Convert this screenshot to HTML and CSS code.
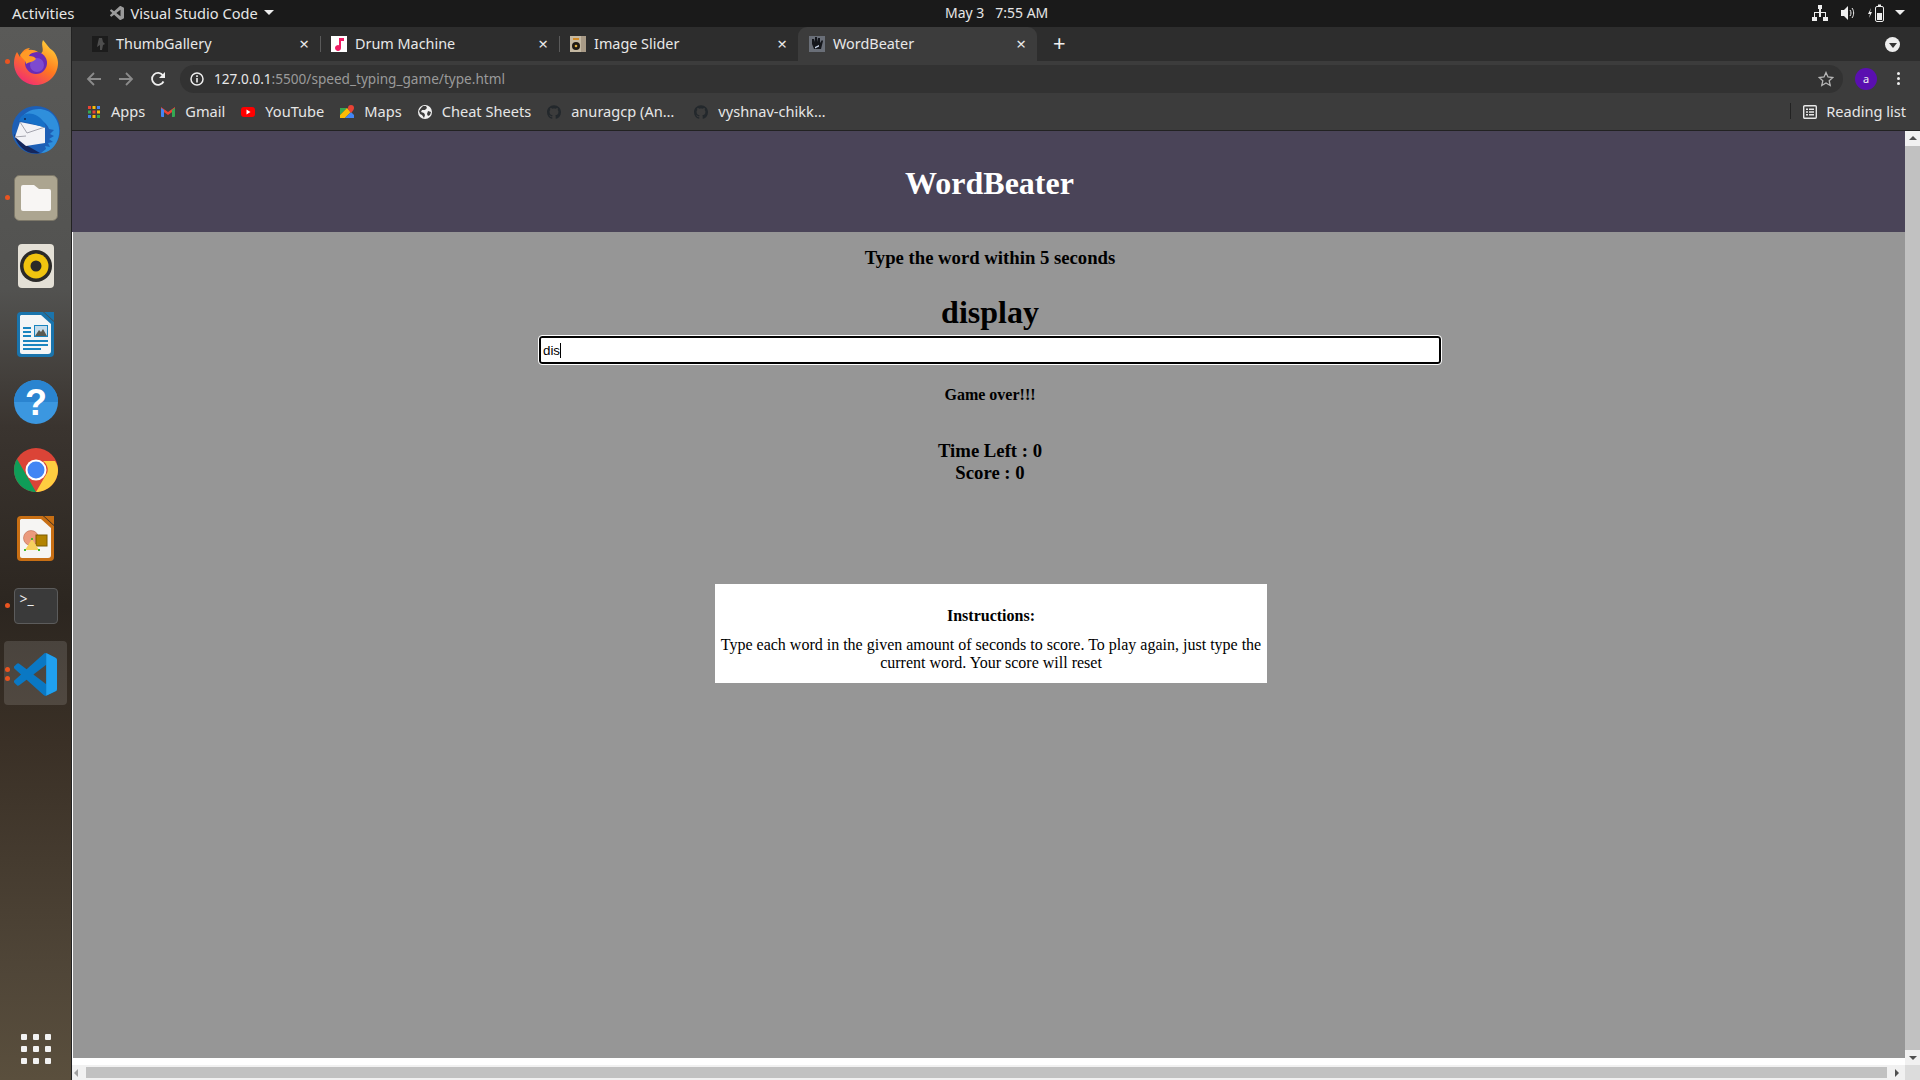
FILE: index.html
```html
<!DOCTYPE html>
<html lang="en">
<head>
    <meta charset="UTF-8">
    <title>WordBeater</title>
    <link rel="stylesheet" href="styles.css">
</head>

<body>
    <!-- Ubuntu top bar -->
    <div class="topbar">
        <span class="activities">Activities</span>
        <span class="app-name">
            <svg class="app-icon" width="14" height="14" viewBox="0 0 24 24"><path fill="#9a9a9a" d="M23.15 2.587L18.21.21a1.494 1.494 0 0 0-1.705.29l-9.46 8.63-4.12-3.128a.999.999 0 0 0-1.276.057L.327 7.261A1 1 0 0 0 .326 8.74L3.899 12 .326 15.26a1 1 0 0 0 .001 1.479L1.65 17.94a.999.999 0 0 0 1.276.057l4.12-3.128 9.46 8.63a1.492 1.492 0 0 0 1.704.29l4.942-2.377A1.5 1.5 0 0 0 24 20.06V3.939a1.5 1.5 0 0 0-.85-1.352zm-5.146 14.861L10.826 12l7.178-5.448v10.896z"/></svg>
            Visual Studio Code
            <i class="down-arrow"></i>
        </span>
        <span class="clock">May 3&nbsp;&nbsp;&nbsp;7:55 AM</span>
        <span class="tray">
            <svg width="16" height="16" viewBox="0 0 16 16"><path fill="#eee" d="M6 0h4v4H9v3h5v5h2v4h-5v-4h2V8H9v4H7V8H3v4h2v4H0v-4h2V7h5V4H6z"/></svg>
            <svg width="16" height="16" viewBox="0 0 16 16"><path fill="#eee" d="M1 5h3l4-4v14l-4-4H1z"/><path fill="none" stroke="#eee" d="M10 5c1.300 1.800 1.300 4.200 0 6M12 3c2.200 3 2.200 7 0 10"/></svg>
            <svg width="16" height="18" viewBox="0 0 16 18"><path fill="#eee" d="M3 4L0 10h2l-1 4 3-6H2z"/><rect x="7.500" y="2.500" width="8" height="15" rx="1.500" fill="none" stroke="#eee"/><rect x="10" y="0.500" width="3" height="2" fill="#eee"/><rect x="9" y="9" width="5" height="7" fill="#eee"/></svg>
            <i class="down-arrow tray-arrow"></i>
        </span>
    </div>

    <div class="desktop">
        <!-- Dock -->
        <nav class="dock">
            <div class="dock-item">
                <i class="dot"></i>
                <svg width="46" height="46" viewBox="0 0 46 46">
                    <defs>
                        <linearGradient id="ffBody" x1="0.8" y1="0" x2="0.2" y2="1"><stop offset="0" stop-color="#ffd23a"/><stop offset="0.5" stop-color="#ff7a1e"/><stop offset="1" stop-color="#f0267a"/></linearGradient>
                    </defs>
                    <path fill="url(#ffBody)" d="M30 1c5 6 6 8 9 10 4 3 6 9 6 13 0 12-10 22-22 22S1 36 1 24c0-4 1-8 3-11l3 5c1-5 5-9 10-9-2 2-2 3-2 4 4-2 9-1 12 2C33 12 27 7 30 1z"/>
                    <circle cx="23" cy="24" r="11" fill="#6a2bb5"/>
                    <circle cx="24" cy="26" r="7" fill="#7d4ad0"/>
                    <path fill="#ff9a26" d="M7 16c4-5 12-7 18-3-4 0-8 1-9 4 4 0 6 1 7 3-4 4-8 3-10 5 0-4-4-5-6-9z"/>
                </svg>
            </div>
            <div class="dock-item">
                <svg width="48" height="48" viewBox="0 0 48 48">
                    <circle cx="24" cy="24" r="24" fill="#1d5fb6"/>
                    <path fill="#14265c" d="M2 28c2 9 9 17 17 19 3 0 6 1 9 0L14 39z"/>
                    <path fill="#2f8fdc" d="M8 15C12 3 32-2 42 10c8 10 7 26-4 34-2 1-5 3-9 3l5-4-1-3 5 1-2-4 5-1-4-3 5-3-4-2 4-4-5-1c-2-6-8-10-14-11-7-1-12 1-15 3z"/>
                    <path fill="#f2f2f6" d="M8 16l25 5v16l-19 3-11-9z"/>
                    <path fill="none" stroke="#a3a3ae" d="M8 16l7 11 18-6M3 31l11-1"/>
                    <path fill="#1670c8" d="M7 15c1-6 8-9 14-7 7 2 12 8 13 14L21 18c-4-2-9-2-14-3z"/>
                    <circle cx="13" cy="13" r="1" fill="#10234d"/>
                </svg>
            </div>
            <div class="dock-item">
                <i class="dot"></i>
                <svg width="44" height="46" viewBox="0 0 44 46">
                    <rect x="0.500" y="0.500" width="43" height="45" rx="5" fill="#aca590" stroke="#7d7869"/>
                    <path fill="#f8f6f4" d="M7 12a2 2 0 0 1 2-2h11l5 4h10a2 2 0 0 1 2 2v18a2 2 0 0 1-2 2H9a2 2 0 0 1-2-2z"/>
                </svg>
            </div>
            <div class="dock-item">
                <svg width="36" height="44" viewBox="0 0 36 44">
                    <rect width="36" height="44" rx="4" fill="#e4e0d6"/>
                    <circle cx="18" cy="22" r="16" fill="#2b2a28"/>
                    <circle cx="18" cy="22" r="12.500" fill="#f1c40f"/>
                    <circle cx="18" cy="22" r="5.500" fill="#2b2a28"/>
                </svg>
            </div>
            <div class="dock-item">
                <svg width="38" height="46" viewBox="0 0 38 46">
                    <path fill="#1a74ac" d="M4 1h22l11 10v31a4 4 0 0 1-4 4H4a4 4 0 0 1-4-4V5a4 4 0 0 1 4-4z"/>
                    <path fill="#f4f5f6" d="M4 4h20l10 9v27a3 3 0 0 1-3 3H5a2 2 0 0 1-2-2V5z"/>
                    <path fill="#1a74ac" d="M27 1h10v9z"/>
                    <path fill="#1a84bf" d="M6 16h8v2H6zM6 20h8v2H6zM6 24h8v2H6zM6 29h25v2H6zM6 33h25v2H6zM6 37h18v2H6z"/>
                    <rect x="17" y="14" width="14" height="12" fill="#1a84bf"/>
                    <rect x="18" y="15" width="12" height="10" fill="#c6dceb"/>
                    <path fill="#5b5b52" d="M18 25l4-6 2 2 2-3 4 7z"/>
                </svg>
            </div>
            <div class="dock-item">
                <svg width="44" height="44" viewBox="0 0 44 44">
                    <circle cx="22" cy="22" r="22" fill="#3b97e0"/>
                    <path fill="#2a84d0" d="M0 22a22 22 0 0 1 44 0z"/>
                    <text class="help-mark" x="22" y="35" text-anchor="middle">?</text>
                </svg>
            </div>
            <div class="dock-item">
                <svg width="44" height="44" viewBox="0 0 44 44">
                    <circle cx="22" cy="22" r="22" fill="#db4437"/>
                    <path fill="#0f9d58" d="M3 11l11 19 8 14C10 44 0 34 0 22c0-4 1-8 3-11z"/>
                    <path fill="#ffcd40" d="M22 13h19c2 3 3 6 3 9 0 12-10 22-22 22l11-19c2-4 0-9-4-12z"/>
                    <circle cx="22" cy="22" r="10.500" fill="#fff"/>
                    <circle cx="22" cy="22" r="8.500" fill="#4285f4"/>
                </svg>
            </div>
            <div class="dock-item">
                <svg width="38" height="46" viewBox="0 0 38 46">
                    <path fill="#c86f14" d="M4 1h22l11 10v31a4 4 0 0 1-4 4H4a4 4 0 0 1-4-4V5a4 4 0 0 1 4-4z"/>
                    <path fill="#f6f5f3" d="M4 4h20l10 9v27a3 3 0 0 1-3 3H5a2 2 0 0 1-2-2V5z"/>
                    <path fill="#c86f14" d="M27 1h10v9z"/>
                    <circle cx="14" cy="23" r="7.500" fill="#eb9a7c" stroke="#b0593c" stroke-width="0.500"/>
                    <rect x="19" y="20" width="11" height="11" fill="#b38300" stroke="#7d5c00"/>
                    <path fill="#f6d05e" d="M15 24l7 11H8z"/>
                    <path fill="#44b82e" d="M14 23h2v2h-2zM7 34h2v2H7zM21 34h2v2h-2z"/>
                </svg>
            </div>
            <div class="dock-item">
                <i class="dot"></i>
                <div class="terminal-icon">&gt;_</div>
            </div>
            <div class="dock-item dock-active">
                <i class="dot dot-one"></i>
                <i class="dot dot-two"></i>
                <svg width="43" height="43" viewBox="0 0 24 24">
                    <path fill="#0a78c4" d="M23.15 2.587L18.21.21a1.494 1.494 0 0 0-1.705.29l-9.46 8.63-4.12-3.128a.999.999 0 0 0-1.276.057L.327 7.261A1 1 0 0 0 .326 8.74L3.899 12 .326 15.26a1 1 0 0 0 .001 1.479L1.65 17.94a.999.999 0 0 0 1.276.057l4.12-3.128 9.46 8.63a1.492 1.492 0 0 0 1.704.29l4.942-2.377A1.5 1.5 0 0 0 24 20.06V3.939a1.5 1.5 0 0 0-.85-1.352zm-5.146 14.861L10.826 12l7.178-5.448v10.896z"/>
                    <path fill="#20a0ef" d="M18.004.03l5.146 2.557A1.5 1.5 0 0 1 24 3.939v16.12a1.5 1.5 0 0 1-.85 1.354l-4.942 2.377a1.500 1.500 0 0 1-.204.08z"/>
                </svg>
            </div>
            <div class="app-grid">
                <i></i><i></i><i></i><i></i><i></i><i></i><i></i><i></i><i></i>
            </div>
        </nav>

        <div class="browser">
            <!-- Tabs -->
            <div class="tabstrip">
                <div class="tab">
                    <svg class="favicon" viewBox="0 0 16 16"><rect width="16" height="16" fill="#1c1c1c"/><path fill="#4e4e4e" d="M7 2h3l1 4 2 2-2 1-1 5H8V9L5 11l1-5z"/></svg>
                    <span class="tab-title">ThumbGallery</span>
                    <span class="tab-close">×</span>
                </div>
                <div class="tab">
                    <svg class="favicon" viewBox="0 0 16 16"><rect width="16" height="16" fill="#fff"/><path fill="#f01c64" d="M8 2h5v3H10v7a3 3 0 1 1-2-2.800z"/></svg>
                    <span class="tab-title">Drum Machine</span>
                    <span class="tab-close">×</span>
                </div>
                <div class="tab">
                    <svg class="favicon" viewBox="0 0 16 16"><rect width="16" height="16" fill="#c4b8a2"/><rect x="11" width="5" height="16" fill="#a89a86"/><circle cx="6" cy="10" r="4" fill="#1f1a14"/><circle cx="6" cy="10" r="1.300" fill="#e0b040"/><path fill="#d08a28" d="M3 2h6v2H3z"/></svg>
                    <span class="tab-title">Image Slider</span>
                    <span class="tab-close">×</span>
                </div>
                <div class="tab tab-active">
                    <svg class="favicon" viewBox="0 0 16 16"><rect width="16" height="16" fill="#6a6f78"/><path fill="#14161b" d="M3 3h2l1 3V1h2v5l1-4h2v5l2-3 1 1-2 8H5L3 8z"/><path fill="#c9d6ea" d="M6 11l4-2v1.500l-4 2z"/></svg>
                    <span class="tab-title">WordBeater</span>
                    <span class="tab-close">×</span>
                </div>
                <span class="new-tab">+</span>
                <span class="tab-search"><i></i></span>
            </div>

            <!-- Toolbar -->
            <div class="toolbar">
                <svg class="nav-icon" viewBox="0 0 16 16"><path fill="none" stroke="#8b8b8b" stroke-width="1.800" d="M15 8H2M8 2L2 8l6 6"/></svg>
                <svg class="nav-icon" viewBox="0 0 16 16"><path fill="none" stroke="#8b8b8b" stroke-width="1.800" d="M1 8h13M8 2l6 6-6 6"/></svg>
                <svg class="nav-icon" viewBox="0 0 16 16"><path fill="none" stroke="#f0f0f0" stroke-width="1.800" d="M13.500 10.500A6 6 0 1 1 13 4.500"/><path fill="#f0f0f0" d="M15 1v6H9z"/></svg>
                <div class="omnibox">
                    <svg class="info-icon" width="14" height="14" viewBox="0 0 14 14"><circle cx="7" cy="7" r="6" fill="none" stroke="#eee" stroke-width="1.500"/><path fill="#eee" d="M6.200 6h1.600v4.500H6.200zM6.200 3.300h1.600v1.600H6.200z"/></svg>
                    <span class="url"><span class="url-host">127.0.0.1</span>:5500/speed_typing_game/type.html</span>
                    <svg class="star-icon" width="16" height="16" viewBox="0 0 16 16"><path fill="none" stroke="#b5b5b5" stroke-width="1.300" d="M8 1.500l2 4.500 4.800.5-3.600 3.200 1 4.800L8 12l-4.200 2.500 1-4.800L1.200 6.500 6 6z"/></svg>
                </div>
                <span class="avatar">a</span>
                <span class="menu-dots"><i></i><i></i><i></i></span>
            </div>

            <!-- Bookmarks bar -->
            <div class="bookmarks">
                <span class="bookmark">
                    <svg class="bm-icon" viewBox="0 0 14 14"><path fill="#ea4335" d="M1 1h3v3H1z"/><path fill="#fbbc05" d="M5.500 1h3v3h-3z"/><path fill="#4285f4" d="M10 1h3v3h-3z"/><path fill="#34a853" d="M1 5.500h3v3H1z"/><path fill="#ea4335" d="M5.500 5.500h3v3h-3z"/><path fill="#fbbc05" d="M10 5.500h3v3h-3z"/><path fill="#4285f4" d="M1 10h3v3H1z"/><path fill="#fbbc05" d="M5.500 10h3v3h-3z"/><path fill="#34a853" d="M10 10h3v3h-3z"/></svg>
                    Apps
                </span>
                <span class="bookmark">
                    <svg class="bm-icon" viewBox="0 0 14 14"><path fill="#ea4335" d="M0 2l7 5 7-5v3L7 10 0 5z"/><path fill="#4285f4" d="M0 3l3 2v7H1a1 1 0 0 1-1-1z"/><path fill="#34a853" d="M14 3l-3 2v7h2a1 1 0 0 0 1-1z"/></svg>
                    Gmail
                </span>
                <span class="bookmark">
                    <svg class="bm-icon" viewBox="0 0 14 14"><rect y="2" width="14" height="10" rx="3" fill="#f00"/><path fill="#fff" d="M5.500 4.500L9.500 7l-4 2.500z"/></svg>
                    YouTube
                </span>
                <span class="bookmark">
                    <svg class="bm-icon" viewBox="0 0 14 14"><path fill="#34a853" d="M0 3l7 0-7 7z"/><path fill="#fbbc05" d="M0 10l7-7 4 4-6 6H0z"/><path fill="#4285f4" d="M5 13l6-6 3 3v3z"/><path fill="#ea4335" d="M11 0a3 3 0 0 1 3 3c0 2-3 5-3 5S8 5 8 3a3 3 0 0 1 3-3z"/></svg>
                    Maps
                </span>
                <span class="bookmark">
                    <svg class="bm-icon" viewBox="0 0 14 14"><circle cx="7" cy="7" r="7" fill="#f0f0f0"/><path fill="#3c3c3c" d="M5 1l3 0 1 2-2 2-3 0-1 2 3 1 1 2-1 3-2-3-2-1-1-3 2-3zM10 6l3 1-1 3-2 1-1-2z"/></svg>
                    Cheat Sheets
                </span>
                <span class="bookmark bm-anurag">
                    <svg class="bm-icon" viewBox="0 0 24 24"><path fill="#23282c" d="M12 .297c-6.630 0-12 5.373-12 12 0 5.303 3.438 9.800 8.205 11.385.6.113.82-.258.82-.577 0-.285-.01-1.040-.015-2.040-3.338.724-4.042-1.610-4.042-1.610C4.422 18.070 3.633 17.700 3.633 17.700c-1.087-.744.084-.729.084-.729 1.205.084 1.838 1.236 1.838 1.236 1.070 1.835 2.809 1.305 3.495.998.108-.776.417-1.305.76-1.605-2.665-.3-5.466-1.332-5.466-5.930 0-1.310.465-2.380 1.235-3.220-.135-.303-.54-1.523.105-3.176 0 0 1.005-.322 3.300 1.230.96-.267 1.980-.399 3-.405 1.020.006 2.040.138 3 .405 2.280-1.552 3.285-1.230 3.285-1.230.645 1.653.24 2.873.12 3.176.765.84 1.230 1.910 1.230 3.220 0 4.610-2.805 5.625-5.475 5.920.42.36.81 1.096.81 2.220 0 1.606-.015 2.896-.015 3.286 0 .315.21.69.825.57C20.565 22.092 24 17.592 24 12.297c0-6.627-5.373-12-12-12"/></svg>
                    anuragcp (An…
                </span>
                <span class="bookmark">
                    <svg class="bm-icon" viewBox="0 0 24 24"><path fill="#23282c" d="M12 .297c-6.630 0-12 5.373-12 12 0 5.303 3.438 9.800 8.205 11.385.6.113.82-.258.82-.577 0-.285-.01-1.040-.015-2.040-3.338.724-4.042-1.610-4.042-1.610C4.422 18.070 3.633 17.700 3.633 17.700c-1.087-.744.084-.729.084-.729 1.205.084 1.838 1.236 1.838 1.236 1.070 1.835 2.809 1.305 3.495.998.108-.776.417-1.305.76-1.605-2.665-.3-5.466-1.332-5.466-5.930 0-1.310.465-2.380 1.235-3.220-.135-.303-.54-1.523.105-3.176 0 0 1.005-.322 3.300 1.230.96-.267 1.980-.399 3-.405 1.020.006 2.040.138 3 .405 2.280-1.552 3.285-1.230 3.285-1.230.645 1.653.24 2.873.12 3.176.765.84 1.230 1.910 1.230 3.220 0 4.610-2.805 5.625-5.475 5.920.42.36.81 1.096.81 2.220 0 1.606-.015 2.896-.015 3.286 0 .315.21.69.825.57C20.565 22.092 24 17.592 24 12.297c0-6.627-5.373-12-12-12"/></svg>
                    vyshnav-chikk…
                </span>
                <span class="reading-list">
                    <svg class="bm-icon" viewBox="0 0 14 14"><rect x="0.700" y="0.700" width="12.600" height="12.600" rx="1" fill="none" stroke="#e8e8e8" stroke-width="1.400"/><path fill="#e8e8e8" d="M3 3.500h2v1.500H3zM6 3.500h5v1.500H6zM3 6.300h2v1.500H3zM6 6.300h5v1.500H6zM3 9.100h2v1.500H3zM6 9.100h5v1.500H6z"/></svg>
                    Reading list
                </span>
            </div>

            <!-- The game page -->
            <div class="viewport">
                <div class="page">
                    <header class="game-header">
                        <h1>WordBeater</h1>
                    </header>
                    <main class="game">
                        <h3 class="prompt">Type the word within 5 seconds</h3>
                        <h2 class="word">display</h2>
                        <div class="word-field">
                            <input class="word-input" type="text" value="dis">
                            <i class="caret"></i>
                        </div>
                        <p class="message">Game over!!!</p>
                        <div class="stats">
                            <div>Time Left : 0</div>
                            <div>Score : 0</div>
                        </div>
                        <section class="instructions">
                            <h4>Instructions:</h4>
                            <p>Type each word in the given amount of seconds to score. To play again, just type the current word. Your score will reset</p>
                        </section>
                    </main>
                    <div class="page-gap"></div>
                </div>
                <div class="vscroll">
                    <i class="arrow-up"></i>
                    <div class="vthumb"></div>
                    <i class="arrow-down"></i>
                </div>
            </div>
            <div class="hscroll">
                <i class="arrow-left"></i>
                <div class="hthumb"></div>
                <i class="arrow-right"></i>
                <div class="scroll-corner"></div>
            </div>
        </div>
    </div>
</body>
</html>
```

FILE: styles.css
```css
/* General Reset */
* {
    margin: 0;
    padding: 0;
    box-sizing: border-box;
}

i {
    display: block;
}

body {
    width: 1920px;
    height: 1080px;
    overflow: hidden;
    display: flex;
    flex-direction: column;
    font-family: 'Noto Sans', sans-serif;
    background: #000;
}

/* Top bar */
.topbar {
    height: 27px;
    padding-bottom: 2px;
    background: #1a1a1a;
    color: #e6e6e6;
    font-size: 14.6px;
    display: flex;
    align-items: center;
    position: relative;
}

.activities {
    margin-left: 12px;
    font-size: 15px;
}

.app-name {
    margin-left: 33px;
    display: flex;
    align-items: center;
}

.app-icon {
    margin: 0 7px 0 2px;
}

.down-arrow {
    width: 0;
    height: 0;
    border-left: 5px solid transparent;
    border-right: 5px solid transparent;
    border-top: 5px solid #eee;
    margin-left: 6px;
}

.clock {
    position: absolute;
    left: 945px;
    font-size: 14px;
}

.tray {
    margin-left: auto;
    margin-right: 15px;
    display: flex;
    align-items: center;
    gap: 12px;
}

.tray-arrow {
    margin-left: -1px;
}

.desktop {
    flex: 1;
    display: flex;
    min-height: 0;
}

/* Dock */
.dock {
    width: 72px;
    padding-top: 1px;
    display: flex;
    flex-direction: column;
    border-right: 1px solid #222;
    background: linear-gradient(to bottom, #5a5a58 0%, #525250 25%, #3a342f 38%, #2c2620 55%, #3a3026 68%, #504638 90%, #5a4f3d 100%);
}

.dock-item {
    height: 68px;
    display: flex;
    align-items: center;
    justify-content: center;
    position: relative;
}

.dock-active::before {
    content: "";
    position: absolute;
    left: 4px;
    right: 4px;
    top: 1px;
    bottom: 3px;
    background: rgba(255, 255, 255, 0.13);
    border-radius: 4px;
}

.dock-active svg {
    position: relative;
}

.dot {
    position: absolute;
    left: 5px;
    top: 31px;
    width: 5px;
    height: 5px;
    border-radius: 50%;
    background: #e95420;
}

.dot-one {
    top: 27px;
}

.dot-two {
    top: 36px;
}

.help-mark {
    font: bold 36px 'Liberation Sans', sans-serif;
    fill: #fff;
}

.terminal-icon {
    width: 44px;
    height: 36px;
    background: #3a3a3a;
    border: 1px solid #5c5c5c;
    border-radius: 4px;
    color: #eee;
    font-size: 14px;
    line-height: 14px;
    padding: 3px 0 0 5px;
}

.app-grid {
    margin-top: auto;
    margin-bottom: 16px;
    margin-left: 21px;
    display: grid;
    grid-template-columns: repeat(3, 6px);
    grid-auto-rows: 6px;
    gap: 6px;
}

.app-grid i {
    background: #f2f2f2;
    border-radius: 1px;
}

/* Browser */
.browser {
    flex: 1;
    min-width: 0;
    display: flex;
    flex-direction: column;
}

.tabstrip {
    height: 34px;
    background: #2d2d2d;
    color: #e8e8e8;
    font-size: 14.4px;
    display: flex;
    align-items: center;
    padding-left: 9px;
}

.tab {
    width: 239px;
    height: 34px;
    display: flex;
    align-items: center;
    padding: 0 11px 2px;
    position: relative;
}

.tab + .tab::before {
    content: "";
    position: absolute;
    left: 0;
    top: 9px;
    bottom: 9px;
    width: 1px;
    background: #5a5a5a;
}

.tab-active {
    background: #3c3c3c;
    border-radius: 9px 9px 0 0;
}

.tab-active::before {
    display: none;
}

.favicon {
    width: 16px;
    height: 16px;
    flex: none;
    margin-top: 2px;
}

.tab-title {
    margin-left: 8px;
}

.tab-close {
    margin-left: auto;
    font-size: 17px;
    line-height: 17px;
    color: #e8e8e8;
}

.new-tab {
    margin-left: 16px;
    margin-bottom: 4px;
    font-size: 22px;
    line-height: 22px;
    color: #f0f0f0;
}

.tab-search {
    margin-left: auto;
    margin-right: 20px;
    width: 15px;
    height: 15px;
    border-radius: 50%;
    background: #eee;
    display: flex;
    align-items: center;
    justify-content: center;
}

.tab-search i {
    width: 0;
    height: 0;
    margin-top: 2px;
    border-left: 4px solid transparent;
    border-right: 4px solid transparent;
    border-top: 5px solid #333;
}

.toolbar {
    height: 32px;
    background: #3c3c3c;
    display: flex;
    align-items: flex-end;
    padding-left: 14px;
}

.nav-icon {
    width: 16px;
    height: 16px;
    margin-right: 16px;
    margin-bottom: 6px;
}

.omnibox {
    width: 1663px;
    height: 28px;
    margin-left: -2px;
    background: #323232;
    border-radius: 14px;
    display: flex;
    align-items: center;
    padding-left: 10px;
    font-size: 13.6px;
}

.url {
    margin-left: 10px;
    padding-bottom: 2px;
    color: #9a9a9a;
}

.url-host {
    color: #e8e8e8;
}

.star-icon {
    margin-left: auto;
    margin-right: 9px;
}

.avatar {
    width: 22px;
    height: 22px;
    margin-left: 12px;
    margin-bottom: 3px;
    border-radius: 50%;
    background: #5a0fb0;
    color: #f0f0f0;
    font-size: 11px;
    line-height: 22px;
    text-align: center;
}

.menu-dots {
    margin-left: 20px;
    margin-bottom: 8px;
    display: flex;
    flex-direction: column;
    gap: 2px;
}

.menu-dots i {
    width: 3px;
    height: 3px;
    border-radius: 50%;
    background: #eee;
}

.bookmarks {
    height: 38px;
    padding: 0 0 2px 15px;
    background: #3c3c3c;
    border-bottom: 1px solid #222;
    color: #e6e6e6;
    font-size: 14.6px;
    display: flex;
    align-items: center;
}

.bookmark {
    display: flex;
    align-items: center;
    gap: 10px;
    margin-right: 16px;
}

.bm-anurag {
    margin-right: 20px;
}

.bm-icon {
    width: 14px;
    height: 14px;
    flex: none;
    margin-top: 2px;
}

.reading-list {
    margin-left: auto;
    padding-left: 12px;
    padding-right: 14px;
    border-left: 1px solid #222;
    display: flex;
    align-items: center;
    gap: 9px;
    height: 16px;
}

/* Game page */
.viewport {
    flex: 1;
    min-height: 0;
    display: flex;
}

.page {
    flex: 1;
    min-width: 0;
    display: flex;
    flex-direction: column;
    font-family: 'Liberation Serif', serif;
    color: #000;
    background: #fff;
}

.game-header {
    height: 101px;
    padding: 4px 0 0 2px;
    background: #4a4458;
    color: #fff;
    display: flex;
    align-items: center;
    justify-content: center;
}

.game-header h1 {
    font-size: 32px;
}

.game {
    flex: 1;
    margin-left: 1px;
    background: #969696;
    display: flex;
    flex-direction: column;
    align-items: center;
    padding: 15px 0 0 2px;
}

.prompt {
    font-size: 18.72px;
}

.word {
    font-size: 32px;
    margin-top: 25px;
}

.word-field {
    position: relative;
    margin-top: 5px;
}

.word-input {
    display: block;
    width: 902px;
    height: 28px;
    border: 2px solid #000;
    border-radius: 3px;
    outline: 1px solid #fff;
    outline-offset: 0;
    background: #fff;
    padding: 0 2px;
    font: 13.33px 'Liberation Sans', sans-serif;
    color: #000;
}

.caret {
    position: absolute;
    left: 21px;
    top: 7px;
    width: 1px;
    height: 15px;
    background: #000;
}

.message {
    font-size: 16px;
    font-weight: bold;
    margin-top: 22px;
}

.stats {
    font-size: 18.72px;
    font-weight: bold;
    text-align: center;
    margin-top: 36px;
}

.instructions {
    width: 552px;
    height: 99px;
    margin-top: 100px;
    margin-left: 2px;
    background: #fff;
    padding: 23px 4px 0;
    text-align: center;
    font-size: 16px;
}

.instructions h4 {
    font-size: 16px;
}

.instructions p {
    margin-top: 11px;
}

.page-gap {
    height: 7px;
    background: #fff;
}

/* Scrollbars */
.vscroll {
    width: 15px;
    background: #f1f1f1;
    padding: 5px 0;
    display: flex;
    flex-direction: column;
    align-items: center;
}

.arrow-up,
.arrow-down,
.arrow-left,
.arrow-right {
    width: 0;
    height: 0;
    flex: none;
}

.arrow-up {
    border-left: 4px solid transparent;
    border-right: 4px solid transparent;
    border-bottom: 4px solid #505050;
}

.arrow-down {
    border-left: 4px solid transparent;
    border-right: 4px solid transparent;
    border-top: 4px solid #505050;
}

.vthumb {
    width: 100%;
    flex: 1;
    background: #c1c1c1;
    margin: 6px 0;
}

.hscroll {
    height: 15px;
    background: #f1f1f1;
    display: flex;
    align-items: center;
    padding-left: 2px;
}

.arrow-left {
    border-top: 4px solid transparent;
    border-bottom: 4px solid transparent;
    border-right: 4px solid #a0a0a0;
}

.arrow-right {
    border-top: 4px solid transparent;
    border-bottom: 4px solid transparent;
    border-left: 4px solid #505050;
}

.hthumb {
    width: 1801px;
    height: 11px;
    margin: 0 8px;
    background: #c1c1c1;
}

.scroll-corner {
    width: 15px;
    height: 15px;
    margin-left: auto;
    background: #dcdcdc;
}
```
